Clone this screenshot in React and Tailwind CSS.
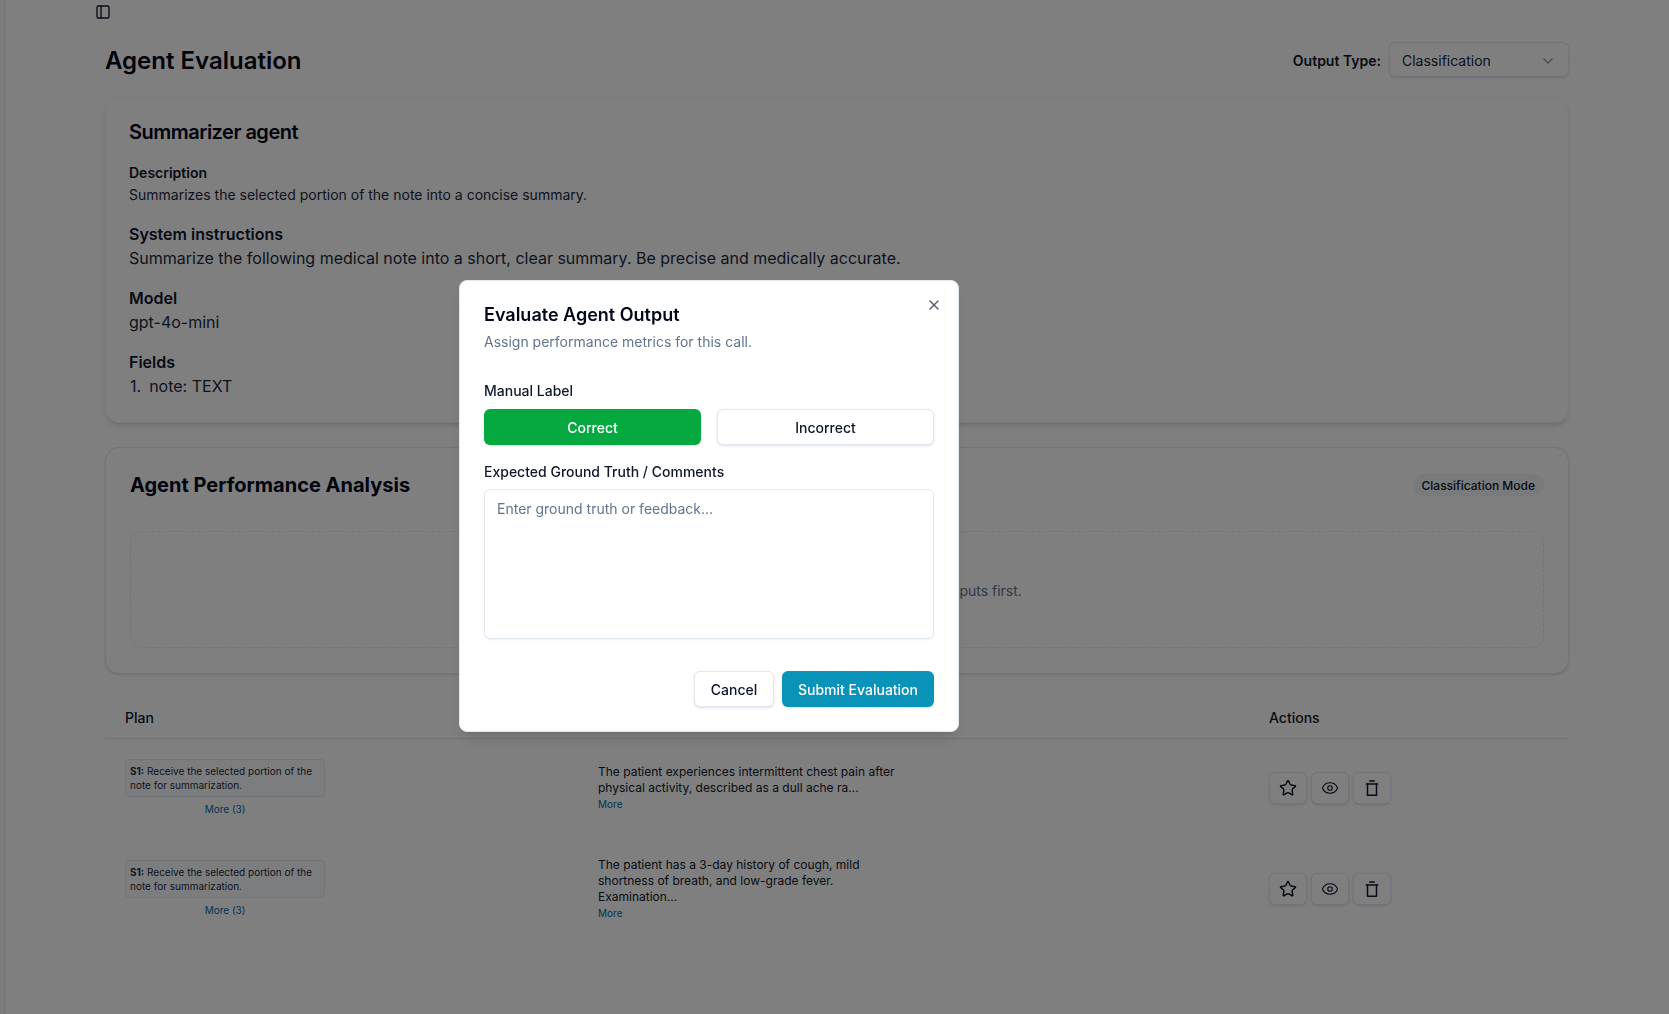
import { PanelLeft, ChevronDown, Star, Eye, X } from 'lucide-react';

const ROWS = [
  {
    id: 1,
    plan: 'Receive the selected portion of the note for summarization.',
    output: 'The patient experiences intermittent chest pain after physical activity, described as a dull ache ra...',
  },
  {
    id: 2,
    plan: 'Receive the selected portion of the note for summarization.',
    output: 'The patient has a 3-day history of cough, mild shortness of breath, and low-grade fever. Examination...',
  },
];

// square-bodied bin, lucide's Trash has tapered sides
const BinIcon = ({ size = 16 }) => (
  <svg width={size} height={size} viewBox="0 0 24 24" fill="none" stroke="currentColor" strokeWidth="2" strokeLinecap="round" strokeLinejoin="round">
    <path d="M9 2.5h6" />
    <path d="M4.5 6.5h15" />
    <path d="M6 6.5v15h12v-15" />
  </svg>
);

const Field = ({ label, value }) => (
  <div className="mt-4 first:mt-0">
    <div className="text-base leading-6 font-semibold text-slate-900">{label}</div>
    <div className="text-base leading-6 text-slate-800">{value}</div>
  </div>
);

const IconButton = ({ icon: Icon, strokeWidth }) => (
  <button className="w-[38px] h-[32px] flex items-center justify-center rounded-md border border-slate-200 bg-white shadow-sm text-slate-900">
    <Icon size={18} strokeWidth={strokeWidth} />
  </button>
);

const EvaluateDialog = () => (
  <div className="fixed inset-0 bg-black/50">
    <div className="absolute left-[459px] top-[280px] w-[500px] h-[452px] bg-white rounded-lg shadow-lg border border-slate-200 px-6 pt-5">
      <button className="absolute right-[16px] top-[16px] text-slate-900 opacity-70">
        <X size={16} />
      </button>
      <h2 className="text-lg leading-7 font-semibold text-slate-950">Evaluate Agent Output</h2>
      <p className="mt-[3px] text-sm leading-5 text-slate-500">Assign performance metrics for this call.</p>

      <div className="mt-[29px] text-sm leading-5 font-medium text-slate-900">Manual Label</div>
      <div className="mt-[8px] grid grid-cols-2 gap-4">
        <button className="h-9 pt-px rounded-md bg-[#06a940] text-white text-sm font-medium shadow-sm">Correct</button>
        <button className="h-9 pt-px rounded-md border border-slate-200 bg-white text-slate-900 text-sm font-medium shadow-sm">Incorrect</button>
      </div>

      <div className="mt-[17px] text-sm leading-5 font-medium text-slate-900">Expected Ground Truth / Comments</div>
      <textarea
        readOnly
        placeholder="Enter ground truth or feedback..."
        className="mt-[7px] block w-full h-[150px] resize-none rounded-md border border-slate-200 bg-white px-3 pt-[9px] pb-2 text-sm leading-5 shadow-xs outline-none placeholder:text-slate-500"
      />

      <div className="mt-8 flex justify-end gap-2">
        <button className="h-9 w-[80px] pt-px rounded-md border border-slate-200 bg-white text-slate-900 text-sm font-medium shadow-sm">Cancel</button>
        <button className="h-9 w-[152px] pt-px rounded-md bg-[#0a93b8] text-white text-sm font-medium shadow-sm">Submit Evaluation</button>
      </div>
    </div>
  </div>
);

export default function App() {
  return (
    <div className="h-screen overflow-hidden bg-white flex font-['Inter',sans-serif] text-slate-900">
      <div className="w-[5px] shrink-0 bg-slate-50 border-r border-slate-200"></div>

      <main className="w-[1464px] ml-[100px] shrink-0">
        <div className="h-[42px] pt-1">
          <PanelLeft size={16} className="-ml-[10px] text-slate-900" />
        </div>

        <div className="flex items-start justify-between h-[36px]">
          <h1 className="h-[36px] pt-[2px] flex items-center text-2xl font-semibold text-slate-950">Agent Evaluation</h1>
          <div className="flex items-start gap-2">
            <span className="h-[36px] pt-[2px] flex items-center text-sm font-semibold text-slate-900">Output Type:</span>
            <div className="w-[180px] h-[35px] pt-[2px] flex items-center justify-between px-3 rounded-md border border-slate-200 bg-white shadow-sm text-sm text-slate-800">
              Classification
              <ChevronDown size={16} className="opacity-50" />
            </div>
          </div>
        </div>

        <section className="mt-[19px] h-[326px] rounded-[14px] border border-slate-100 bg-white shadow-md px-[23px] pt-5">
          <h2 className="text-xl leading-7 font-semibold text-slate-950 tracking-tight">Summarizer agent</h2>
          <div className="mt-[17px] text-sm leading-5 font-semibold text-slate-900">Description</div>
          <p className="mt-0.5 text-sm leading-5 text-slate-800">Summarizes the selected portion of the note into a concise summary.</p>
          <div className="mt-[17px]">
            <Field label="System instructions" value="Summarize the following medical note into a short, clear summary. Be precise and medically accurate." />
            <Field label="Model" value="gpt-4o-mini" />
            <Field label="Fields" value={<><span className="ml-px mr-[8px]">1.</span>note: TEXT</>} />
          </div>
        </section>

        <section className="mt-[24px] h-[227px] rounded-[14px] border border-slate-200 bg-white shadow-sm px-6 pt-[23px]">
          <div className="flex items-center justify-between">
            <h2 className="text-xl leading-7 font-bold text-slate-950">Agent Performance Analysis</h2>
            <span className="px-[9px] pt-[3px] pb-px rounded-full bg-slate-100 text-xs leading-[18px] font-medium text-slate-900">Classification Mode</span>
          </div>
          <div className="mt-8 h-[117px] pt-[2px] pr-[5px] flex items-center justify-center rounded-xl border border-dashed border-slate-200 text-sm text-slate-500">
            No evaluations done. Please evaluate some outputs first.
          </div>
        </section>

        <div className="mt-[24px] grid grid-cols-[493px_671px_1fr] h-[41px] items-center border-b border-slate-200 text-sm font-medium text-slate-900">
          <div className="pl-5">Plan</div>
          <div>Output</div>
          <div>Actions</div>
        </div>

        {ROWS.map((row) => (
          <div key={row.id} className="grid grid-cols-[493px_671px_1fr] h-[101px] items-center">
            <div className="pl-5 pb-[1px]">
              <div className="w-[200px]">
                <div className="rounded border border-slate-200 bg-slate-50 p-1 text-[10px] leading-[14px] text-slate-800">
                  <span className="font-bold">S1:</span> {row.plan}
                </div>
                <div className="mt-[5px] mb-[3px] text-center text-[10px] leading-[15px] text-[#0369a1]">More (3)</div>
              </div>
            </div>
            <div className="w-[300px] pb-[3px] text-xs leading-4 text-slate-900">
              <p>{row.output}</p>
              <span className="block mt-px text-[10px] leading-[15px] text-[#0369a1]">More</span>
            </div>
            <div className="flex gap-1 pb-[4px]">
              <IconButton icon={Star} />
              <IconButton icon={Eye} strokeWidth={1.5} />
              <IconButton icon={BinIcon} />
            </div>
          </div>
        ))}
      </main>

      <EvaluateDialog />
    </div>
  );
}
